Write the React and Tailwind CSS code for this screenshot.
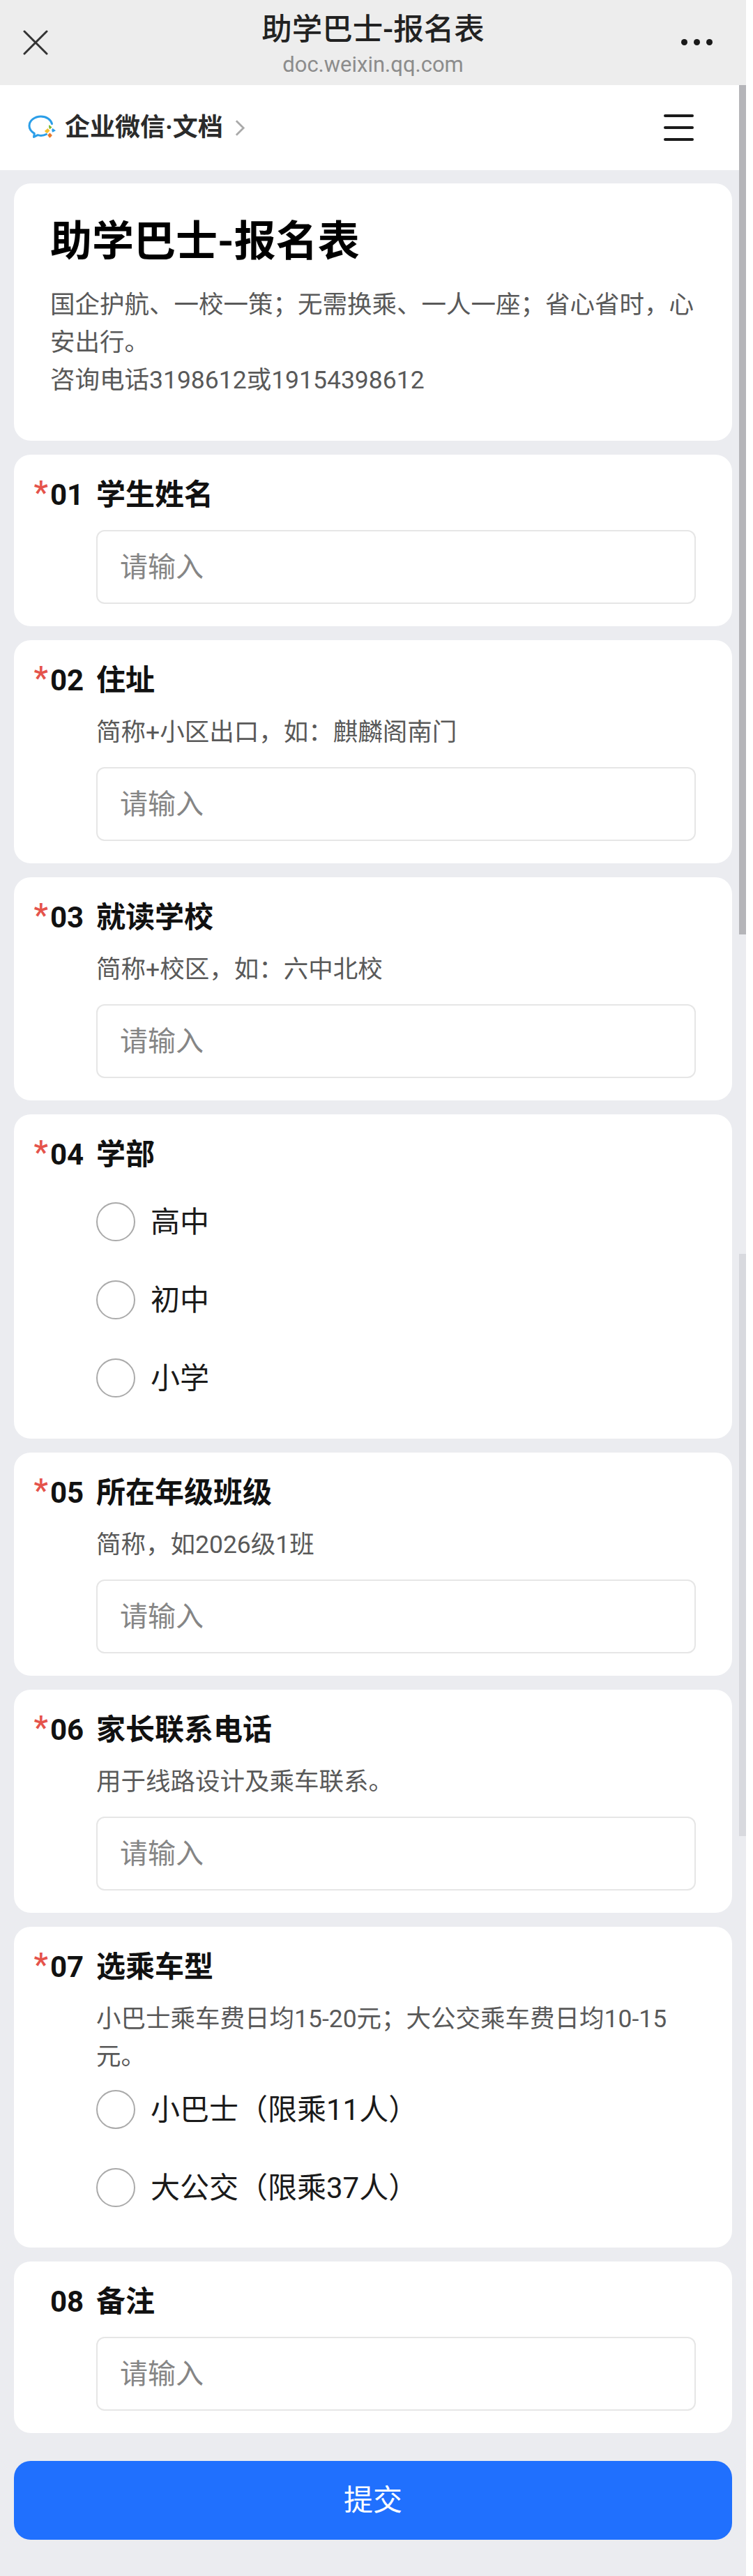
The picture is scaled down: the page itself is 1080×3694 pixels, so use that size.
const textFont = "font-['Roboto','Noto_Sans_CJK_SC',sans-serif]";

function WecomLogo() {
  return (
    <svg viewBox="0 0 40 36" className="w-[40px] h-[36px] shrink-0" fill="none">
      <path d="M26.500 27.500c-2.300 1.300-4.800 1.900-7.800 1.900-1.600 0-3.100-.2-4.500-.7l-5.700 2.700.8-5C5 23.800 2 19.800 2 15.500 2 8 9.600 2 18.700 2c7.800 0 14.300 4.300 15.800 10.500" stroke="#2b9ee8" strokeWidth="3" strokeLinecap="round" strokeLinejoin="round" />
      <path d="M30.500 14l4 3.400-3 2.800c-1.500-1.100-1.900-4.100-1-6.200z" fill="#7cb82f" />
      <path d="M35.500 19l4.500 3.300-4.500 2.400c-1.200-.7-1.800-3.800 0-5.700z" fill="#2b9ee8" />
      <path d="M31.500 25.500l3.400 3.500c-1.100 1.900-2.900 3.300-4 3.600l-2.700-3.800z" fill="#e8792b" />
      <path d="M24 22.800l4.500-3.700 3 3.300-3.300 3.300c-1.600.4-3.400-1-4.200-2.900z" fill="#f5c02e" />
    </svg>
  );
}

function Label({ num, name, required = true }) {
  return (
    <div className="flex h-[60px] text-[42px] leading-[60px] font-bold text-[#111]">
      <div className="relative w-[66px] shrink-0">
        {required && <span className="absolute right-[calc(100%+3px)] top-[-4px] text-[46px] font-medium text-[#e5534b]">*</span>}
        {num}
      </div>
      <div>{name}</div>
    </div>
  );
}

function Hint({ children }) {
  return <p className="ml-[66px] text-[35.500px] leading-[54px] text-[#595959] max-w-[850px]">{children}</p>;
}

function TextBox() {
  return (
    <input
      placeholder="请输入"
      className="ml-[66px] block w-[860px] h-[106px] pl-[32px] pr-4 rounded-[12px] border-2 border-[#e6e6e6] bg-white text-[40px] outline-none placeholder:text-[#858585]"
    />
  );
}

function Radio({ label }) {
  return (
    <label className="ml-[66px] flex items-center h-[56px] gap-[22px] text-[42px] text-[#1a1a1a]">
      <span className="w-[56px] h-[56px] shrink-0 rounded-full border-2 border-[#aaaaaa] bg-white" />
      {label}
    </label>
  );
}

function InputCard({ num, name, hint, required }) {
  return (
    <section className="bg-white rounded-[24px] pt-[28px] pb-[32px] pl-[52px] pr-[52px]">
      <Label num={num} name={name} required={required} />
      {hint ? (
        <div className="mt-[17px] mb-[23px]"><Hint>{hint}</Hint></div>
      ) : (
        <div className="h-[20px]" />
      )}
      <TextBox />
    </section>
  );
}

export default function App() {
  return (
    <div className={`relative w-[1070px] h-[3694px] bg-[#ebecf0] ${textFont}`}>
      {/* wechat title bar */}
      <header className="relative h-[122px] bg-[#ededed]">
        <svg viewBox="0 0 36 36" className="absolute left-[33px] top-[43px] w-[36px] h-[36px]" stroke="#333" strokeWidth="3" strokeLinecap="round">
          <path d="M2 2l32 32M34 2L2 34" />
        </svg>
        <div className="flex flex-col items-center pt-[14px]">
          <div className="text-[43.500px] leading-[58px] font-medium text-[#222]">助学巴士-报名表</div>
          <div className="text-[31px] leading-[42px] text-[#8c8c8c]">doc.weixin.qq.com</div>
        </div>
        <div className="absolute right-[48px] top-[56px] flex gap-[9px]">
          <span className="w-[9px] h-[9px] rounded-full bg-[#1a1a1a]" />
          <span className="w-[9px] h-[9px] rounded-full bg-[#1a1a1a]" />
          <span className="w-[9px] h-[9px] rounded-full bg-[#1a1a1a]" />
        </div>
      </header>

      {/* doc bar */}
      <nav className="flex items-center justify-between h-[122px] bg-white pl-[40px] pr-[75px]">
        <div className="flex items-center">
          <WecomLogo />
          <span className="ml-[13px] text-[36px] font-bold text-[#2b2b2b]">企业微信·文档</span>
          <svg viewBox="0 0 16 26" className="ml-[17px] w-[15px] h-[25px]" fill="none" stroke="#aaa" strokeWidth="3">
            <path d="M2 2l11 11L2 24" />
          </svg>
        </div>
        <div className="flex flex-col gap-[13px]">
          <span className="block w-[43px] h-[4px] rounded-full bg-[#1a1a1a]" />
          <span className="block w-[43px] h-[4px] rounded-full bg-[#1a1a1a]" />
          <span className="block w-[43px] h-[4px] rounded-full bg-[#1a1a1a]" />
        </div>
      </nav>

      <main className="flex flex-col gap-[20px] pt-[19px] pl-[20px] pr-[20px]">
        <section className="h-[369px] bg-white rounded-[24px] pt-[54px] pl-[52px] pr-[40px]">
          <h1 className="text-[60px] leading-[60px] font-bold text-black">助学巴士-报名表</h1>
          <p className="mt-[33px] text-[35.500px] leading-[54px] text-[#595959]">
            国企护航、一校一策；无需换乘、一人一座；省心省时，心安出行。
            <br />
            咨询电话3198612或19154398612
          </p>
        </section>

        <InputCard num="01" name="学生姓名" />
        <InputCard num="02" name="住址" hint="简称+小区出口，如：麒麟阁南门" />
        <InputCard num="03" name="就读学校" hint="简称+校区，如：六中北校" />

        <section className="bg-white rounded-[24px] pt-[28px] pb-[59px] pl-[52px] pr-[52px]">
          <Label num="04" name="学部" />
          <div className="mt-[38px] flex flex-col gap-[56px]">
            <Radio label="高中" />
            <Radio label="初中" />
            <Radio label="小学" />
          </div>
        </section>

        <InputCard num="05" name="所在年级班级" hint="简称，如2026级1班" />
        <InputCard num="06" name="家长联系电话" hint="用于线路设计及乘车联系。" />

        <section className="bg-white rounded-[24px] pt-[28px] pb-[58px] pl-[52px] pr-[52px]">
          <Label num="07" name="选乘车型" />
          <div className="mt-[17px]">
            <Hint>小巴士乘车费日均15-20元；大公交乘车费日均10-15元。</Hint>
          </div>
          <div className="mt-[21px] flex flex-col gap-[56px]">
            <Radio label="小巴士（限乘11人）" />
            <Radio label="大公交（限乘37人）" />
          </div>
        </section>

        <InputCard num="08" name="备注" required={false} />

        <button className="mt-[20px] h-[113px] rounded-[24px] bg-[#2070fe] text-white text-[42px]">提交</button>
      </main>

      {/* page scrollbar, captured mid-scroll */}
      <div className="absolute right-0 top-[122px] w-[10px] h-[1218px] bg-[#b5b5b9]" />
      <div className="absolute right-0 top-[1798px] w-[10px] h-[835px] bg-[#d8d9de]" />
    </div>
  );
}
